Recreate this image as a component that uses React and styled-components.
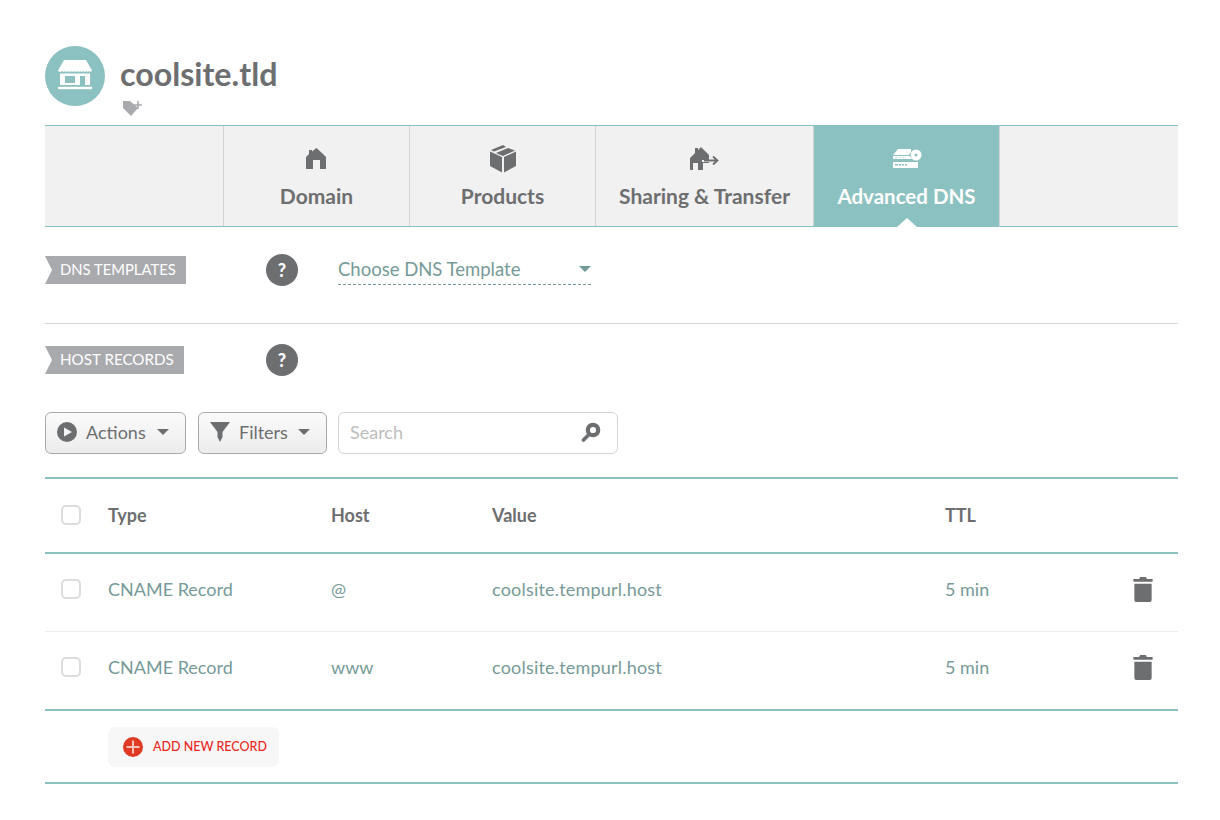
import React from 'react';
import styled, { createGlobalStyle } from 'styled-components';

const Global = createGlobalStyle`
  html, body { margin: 0; padding: 0; background: #fff; }
  body { font-family: Lato, "Open Sans", "Liberation Sans", sans-serif; color: #6d6e70; }
`;
const Page = styled.div`
  width: 1133px;
  margin-left: 45px;
  padding-top: 46px;
`;
const Header = styled.header`
  display: flex;
  gap: 15px;
  height: 79px;
`;
const Avatar = styled.div`
  box-sizing: border-box;
  width: 60px;
  height: 60px;
  padding-bottom: 2px;
  border-radius: 50%;
  background: #8cc1c1;
  display: flex;
  align-items: center;
  justify-content: center;
`;
const TitleBlock = styled.div`
  display: flex;
  flex-direction: column;
  align-items: flex-start;
`;
const Title = styled.h1`
  margin: 9px 0 0;
  font-size: 32.2px;
  line-height: 38px;
  font-weight: 700;
  color: #6d6e70;
`;
const TagButton = styled.div`
  display: flex;
  margin: 7px 0 0 2px;
`;
const Tabs = styled.nav`
  display: flex;
  height: 100px;
  background: #f1f1f1;
  border-top: 1px solid #8cc1c1;
  border-bottom: 1px solid #8cc1c1;
`;
const Spacer = styled.div`
  width: 178px;
  border-right: 1px solid #d2d2d2;
`;
const Tab = styled.div`
  position: relative;
  box-sizing: border-box;
  width: ${p => p.$w}px;
  display: flex;
  flex-direction: column;
  align-items: center;
  border-right: 1px solid #d2d2d2;
  background: ${p => (p.$active ? '#8cc1c1' : 'transparent')};
  color: ${p => (p.$active ? '#fff' : '#6d6e70')};
  margin-bottom: ${p => (p.$active ? '-1px' : '0')};
`;
const TabIcon = styled.div`
  height: 32px;
  margin-top: 17px;
  display: flex;
  align-items: center;
  justify-content: center;
`;
const TabLabel = styled.div`
  margin-top: 8px;
  font-size: ${p => (p.$active ? 20.5 : 21)}px;
  line-height: 26px;
  font-weight: 700;
  white-space: nowrap;
`;
const Caret = styled.span`
  position: absolute;
  bottom: 0;
  left: 50%;
  margin-left: -10px;
  border-left: 10px solid transparent;
  border-right: 10px solid transparent;
  border-bottom: 9px solid #fff;
`;
const SectionRow = styled.section`
  box-sizing: border-box;
  display: flex;
  align-items: flex-start;
  height: ${p => p.$h}px;
  padding-top: ${p => p.$pt}px;
  border-bottom: ${p => (p.$line ? '1px solid #d6d6d6' : 'none')};
`;
const LabelSlot = styled.div`
  width: 221px;
  display: flex;
  align-items: center;
  height: 32px;
`;
const Ribbon = styled.div`
  box-sizing: border-box;
  height: 28px;
  width: ${p => p.$w}px;
  padding-left: 15px;
  background: #a9aaae;
  color: #fff;
  font-size: ${p => p.$fs}px;
  line-height: 26px;
  white-space: nowrap;
  clip-path: polygon(0 0, 100% 0, 100% 100%, 0 100%, 7px 50%);
`;
const Help = styled.div`
  width: 32px;
  height: 32px;
  border-radius: 50%;
  background: #6d6e70;
  color: #fff;
  font-size: 18px;
  font-weight: 900;
  display: flex;
  align-items: center;
  justify-content: center;
`;
const Select = styled.div`
  box-sizing: border-box;
  width: 253px;
  height: 31px;
  margin-left: 40px;
  display: flex;
  align-items: center;
  justify-content: space-between;
  border-bottom: 1px dashed #6f9a99;
  color: #769a98;
  font-size: 18.5px;
  line-height: 30px;
`;
const Arrow = styled.span`
  width: 0;
  height: 0;
  border-left: 6.5px solid transparent;
  border-right: 6.5px solid transparent;
  border-top: 6px solid ${p => p.$c};
`;
const Toolbar = styled.div`
  display: flex;
  gap: 12px;
  height: 42px;
`;
const Button = styled.div`
  box-sizing: border-box;
  width: ${p => p.$w}px;
  height: 42px;
  padding: 0 16px 2px 11px;
  display: flex;
  align-items: center;
  justify-content: space-between;
  border: 1px solid #a9aaae;
  border-radius: 6px;
  background: linear-gradient(#fbfbfb, #ececec);
  font-size: 18px;
  color: #6d6e70;
`;
const ButtonMain = styled.span`
  display: flex;
  align-items: center;
  gap: 9px;
`;
const Search = styled.div`
  box-sizing: border-box;
  width: 280px;
  height: 42px;
  margin-left: -1px;
  padding: 0 16px 2px 11px;
  display: flex;
  align-items: center;
  justify-content: space-between;
  border: 1px solid #d4d4d4;
  border-radius: 6px;
  color: #bdbdbd;
  font-size: 18px;
`;
const Table = styled.div`
  margin-top: 23px;
  border-top: 2px solid #8cc1c1;
`;
const Row = styled.div`
  display: grid;
  grid-template-columns: 63px 223px 161px 454px 1fr 45px;
  align-items: center;
  box-sizing: border-box;
  height: ${p => p.$h}px;
  padding-bottom: ${p => (p.$head ? 2 : 7)}px;
  border-bottom: ${p => (p.$strong ? '2px solid #8cc1c1' : '1px solid #ececec')};
  color: ${p => (p.$head ? '#6d6e70' : '#769a98')};
  font-size: 18px;
  font-weight: ${p => (p.$head ? 700 : 400)};
`;
const ValueText = styled.span`
  letter-spacing: 0.2px;
`;
const TtlCell = styled.span`
  margin-left: -1px;
`;
const Check = styled.div`
  box-sizing: border-box;
  width: 20px;
  height: 20px;
  margin-left: 16px;
  border: 2px solid #dcdcdc;
  border-radius: 5px;
  background: #fff;
`;
const Trash = styled.div`
  display: flex;
`;
const AddRow = styled.div`
  box-sizing: border-box;
  height: 73px;
  padding: 16px 0 0 63px;
  border-bottom: 2px solid #8cc1c1;
`;
const AddButton = styled.div`
  box-sizing: border-box;
  width: 171px;
  height: 40px;
  padding: 0 0 1px 15px;
  display: flex;
  align-items: center;
  gap: 10px;
  background: #f7f7f7;
  border-radius: 7px;
  color: #e8281e;
  font-size: 12.5px;
  font-weight: 500;
  white-space: nowrap;
`;

const StoreIcon = () => (
  <svg width="34" height="30" viewBox="0 0 34 30">
    <path fill="#fff" d="M6 0h22l6 10.500c-1 1.500-2 1.500-2.800.4-1 1.200-2.300 1.200-3 0-1 1.200-2.300 1.200-3 0-1 1.200-2.300 1.200-3 0-1 1.200-2.300 1.200-3 0-1 1.200-2.300 1.200-3 0-1 1.200-2.300 1.200-3 0-1 1.200-2.300 1.200-3 0-1 1.200-2.300 1.200-3 0-1 1.200-2.300 1.200-3 0C1.800 12.200.8 12.200 0 10.500z" />
    <path fill="#fff" fillRule="evenodd" d="M2 13.500h30V25h-5v-9h-5v9H2zM7 16v7h10v-7z" />
    <rect fill="#fff" x="0" y="26.800" width="34" height="2.400" />
  </svg>
);
const TagIcon = () => (
  <svg width="21" height="18" viewBox="0 0 21 18">
    <path fill="#a9aaae" d="M1 1h7l8 7-7 8-8-8z" />
    <path stroke="#a9aaae" strokeWidth="1.600" d="M16 1v8M12 5h8" />
  </svg>
);
const HomeIcon = () => (
  <svg width="21" height="22" viewBox="0 0 21 22">
    <path fill="#6d6e70" d="M0 21V9l3-3V2h3v1.500L10.500 0 17 6l3 3v12h-6v-9H7v9z" />
  </svg>
);
const BoxIcon = () => (
  <svg width="26" height="28" viewBox="0 0 26 28">
    <path fill="#6d6e70" d="M12 12 0 6.500V21l12 6.500zM14 12v15.500L26 21V6.500z" />
    <path fill="#6d6e70" d="M13 0 1 5l3 1.500L16 2zM18 3 6 8l7 3 12-5.500z" />
  </svg>
);
const ShareIcon = () => (
  <svg width="30" height="24" viewBox="0 0 30 24">
    <path fill="#6d6e70" d="M0 11 5 6V1h3v2l3-3 8 8v5h-7v2h7v1h-6v7H8v-7H3v7H0z" />
    <path stroke="#6d6e70" strokeWidth="1.800" fill="none" d="M14 13.500h13M23 9.500l4.500 4-4.500 4" />
  </svg>
);
const DnsIcon = () => (
  <svg width="30" height="20" viewBox="0 0 30 20">
    <path fill="#fff" d="M6 0h13v3a7 7 0 0 0-2 3H1z" />
    <path fill="#fff" fillRule="evenodd" d="M1 7h17c.5 1.500 1 2 2 3H1zm2 1.500V9h3v-.5zm4 0V9h2v-.5zm3 0V9h2v-.5z" />
    <path fill="#fff" fillRule="evenodd" d="M1 13h25v6H1zm2 2v1.500h3V15zm4 0v1.500h2V15zm3 0v1.500h2V15zm3 0v1.500h2V15z" />
    <circle cx="24" cy="6" r="5.500" fill="#fff" />
    <circle cx="24" cy="6" r="1.500" fill="#8cc1c1" />
  </svg>
);
const PlayIcon = () => (
  <svg width="20" height="20" viewBox="0 0 20 20">
    <circle cx="10" cy="10" r="10" fill="#6d6e70" />
    <path fill="#f4f4f4" d="M7 5.500 15 10l-8 4.500z" />
  </svg>
);
const FunnelIcon = () => (
  <svg width="20" height="20" viewBox="0 0 20 20">
    <path fill="#6d6e70" d="M0 0h20l-7.500 10v5L10 20l-2.500-5v-5z" />
  </svg>
);
const SearchIcon = () => (
  <svg width="20" height="20" viewBox="0 0 20 20">
    <circle cx="12" cy="8" r="5.200" fill="none" stroke="#6d6e70" strokeWidth="4.200" />
    <path stroke="#6d6e70" strokeWidth="3.600" strokeLinecap="round" d="M7.500 13 2.500 18" />
  </svg>
);
const TrashIcon = () => (
  <svg width="20" height="25" viewBox="0 0 20 26">
    <path fill="#6d6e70" d="M6 2 7 0h6l1 2h6v3H0V2zM1 7h18v17a2 2 0 0 1-2 2H3a2 2 0 0 1-2-2z" />
  </svg>
);
const PlusIcon = () => (
  <svg width="20" height="20" viewBox="0 0 20 20">
    <circle cx="10" cy="10" r="10" fill="#e03a24" />
    <path stroke="#f6c4bb" strokeWidth="2" d="M10 3.500v13M3.500 10h13" />
  </svg>
);

const tabs = [
  { label: 'Domain', w: 186, icon: <HomeIcon /> },
  { label: 'Products', w: 186, icon: <BoxIcon /> },
  { label: 'Sharing & Transfer', w: 218, icon: <ShareIcon /> },
  { label: 'Advanced DNS', w: 186, icon: <DnsIcon />, active: true },
];
const records = [
  { host: '@', h: 78 },
  { host: 'www', h: 79, strong: true },
];

export default function App() {
  return (
    <Page>
      <Global />
      <Header>
        <Avatar><StoreIcon /></Avatar>
        <TitleBlock>
          <Title>coolsite.tld</Title>
          <TagButton><TagIcon /></TagButton>
        </TitleBlock>
      </Header>
      <Tabs>
        <Spacer />
        {tabs.map(t => (
          <Tab key={t.label} $w={t.w} $active={t.active}>
            <TabIcon>{t.icon}</TabIcon>
            <TabLabel $active={t.active}>{t.label}</TabLabel>
            {t.active && <Caret />}
          </Tab>
        ))}
      </Tabs>
      <SectionRow $h={97} $pt={27} $line>
        <LabelSlot><Ribbon $w={141} $fs={14.8}>DNS TEMPLATES</Ribbon></LabelSlot>
        <Help>?</Help>
        <Select>
          Choose DNS Template
          <Arrow $c="#6f9a99" />
        </Select>
      </SectionRow>
      <SectionRow $h={88} $pt={20}>
        <LabelSlot><Ribbon $w={139} $fs={15.2}>HOST RECORDS</Ribbon></LabelSlot>
        <Help>?</Help>
      </SectionRow>
      <Toolbar>
        <Button $w={141}><ButtonMain><PlayIcon />Actions</ButtonMain><Arrow $c="#6d6e70" /></Button>
        <Button $w={129}><ButtonMain><FunnelIcon />Filters</ButtonMain><Arrow $c="#6d6e70" /></Button>
        <Search>Search<SearchIcon /></Search>
      </Toolbar>
      <Table>
        <Row $head $strong $h={75}>
          <Check />
          <span>Type</span>
          <span>Host</span>
          <span>Value</span>
          <TtlCell>TTL</TtlCell>
          <span />
        </Row>
        {records.map(r => (
          <Row key={r.host} $h={r.h} $strong={r.strong}>
            <Check />
            <span>CNAME Record</span>
            <span>{r.host}</span>
            <ValueText>coolsite.tempurl.host</ValueText>
            <TtlCell>5 min</TtlCell>
            <Trash><TrashIcon /></Trash>
          </Row>
        ))}
        <AddRow>
          <AddButton><PlusIcon />ADD NEW RECORD</AddButton>
        </AddRow>
      </Table>
    </Page>
  );
}
